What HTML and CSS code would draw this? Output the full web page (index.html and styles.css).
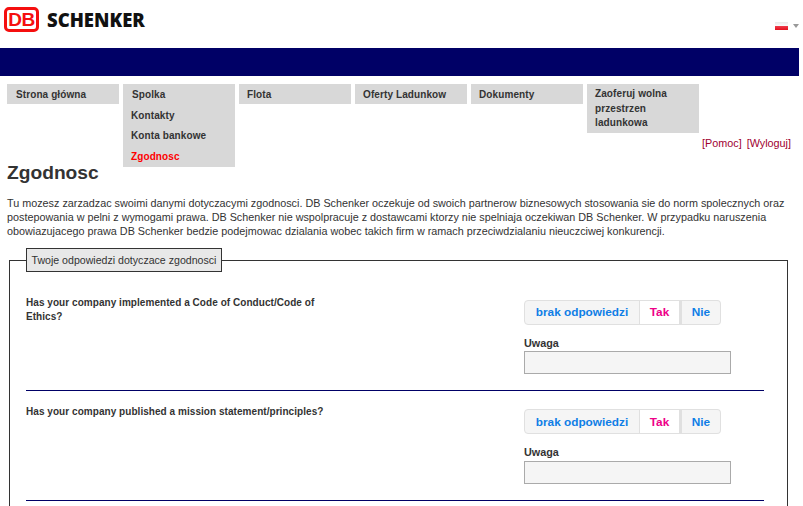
FILE: index.html
```html
<!DOCTYPE html>
<html lang="pl">
<head>
    <meta charset="UTF-8">
    <meta name="viewport" content="width=device-width, initial-scale=1.0">
    <title>Zgodnosc</title>
    <link rel="stylesheet" href="styles.css">
</head>
<body>

    <div class="header">
        <div class="logo">
            <span class="logo-db">DB</span>
            <span class="logo-name">SCHENKER</span>
        </div>
        <div class="lang">
            <span class="flag"></span>
            <span class="lang-arrow"></span>
        </div>
    </div>
    <div class="band"></div>

    <div class="nav">
        <div class="menu">
            <div class="menu-item"><a class="menu-top">Strona główna</a></div>
            <div class="menu-item">
                <a class="menu-top">Spolka</a>
                <div class="submenu">
                    <a class="menu-sub">Kontakty</a>
                    <a class="menu-sub">Konta bankowe</a>
                    <a class="menu-sub current">Zgodnosc</a>
                </div>
            </div>
            <div class="menu-item"><a class="menu-top">Flota</a></div>
            <div class="menu-item"><a class="menu-top">Oferty Ladunkow</a></div>
            <div class="menu-item"><a class="menu-top">Dokumenty</a></div>
            <div class="menu-item"><a class="menu-top wrap">Zaoferuj wolna przestrzen ladunkowa</a></div>
        </div>
        <div class="links"><a>[Pomoc]</a><a>[Wyloguj]</a></div>
    </div>

    <div class="content">
        <h1>Zgodnosc</h1>
        <p class="intro">Tu mozesz zarzadzac swoimi danymi dotyczacymi zgodnosci. DB Schenker oczekuje od swoich partnerow biznesowych stosowania sie do norm spolecznych oraz postepowania w pelni z wymogami prawa. DB Schenker nie wspolpracuje z dostawcami ktorzy nie spelniaja oczekiwan DB Schenker. W przypadku naruszenia obowiazujacego prawa DB Schenker bedzie podejmowac dzialania wobec takich firm w ramach przeciwdzialaniu nieuczciwej konkurencji.</p>

        <fieldset class="answers">
            <legend>Twoje odpowiedzi dotyczace zgodnosci</legend>

            <div class="question">
                <div class="question-text">Has your company implemented a Code of Conduct/Code of Ethics?</div>
                <div class="question-form">
                    <div class="choice">
                        <button type="button" class="none">brak odpowiedzi</button>
                        <button type="button" class="yes">Tak</button>
                        <button type="button" class="no">Nie</button>
                    </div>
                    <label for="note1">Uwaga</label>
                    <input type="text" id="note1">
                </div>
            </div>

            <div class="question">
                <div class="question-text">Has your company published a mission statement/principles?</div>
                <div class="question-form">
                    <div class="choice">
                        <button type="button" class="none">brak odpowiedzi</button>
                        <button type="button" class="yes">Tak</button>
                        <button type="button" class="no">Nie</button>
                    </div>
                    <label for="note2">Uwaga</label>
                    <input type="text" id="note2">
                </div>
            </div>
        </fieldset>
    </div>

</body>
</html>
```

FILE: styles.css
```css
html {
    height: 100%;
    overflow: hidden;
}

body {
    font-family: "Liberation Sans", Arial, sans-serif;
    font-size: 10.8px;
    color: #333;
    width: 799px;
    height: 100vh;
    overflow: hidden;
    margin: 0;
    background-color: white;
}

.header {
    height: 48px;
    display: flex;
    justify-content: space-between;
}

.logo {
    display: flex;
    align-items: center;
    gap: 8px;
    height: 25px;
    padding: 7px 0 0 4px;
}

.logo-db {
    width: 29px;
    height: 19px;
    border: 3px solid #f50f0f;
    border-radius: 5px;
    color: #f50f0f;
    font-size: 19px;
    font-weight: bold;
    line-height: 19px;
    text-align: center;
    letter-spacing: -0.5px;
}

.logo-name {
    font-family: "Open Sans", sans-serif;
    font-size: 18.5px;
    font-weight: 800;
    color: #111;
}

.lang {
    display: flex;
    align-items: center;
    gap: 5px;
    height: 8px;
    padding-top: 22px;
}

.flag {
    width: 13px;
    height: 8px;
    background: linear-gradient(#e8e8e8, #fafafa 45%, #f04050 45%, #e4101c);
}

.lang-arrow {
    border-left: 3px solid transparent;
    border-right: 3px solid transparent;
    border-top: 4px solid #999;
}

.band {
    height: 28px;
    background-color: #000066;
}

.nav {
    display: grid;
    padding-top: 8px;
}

.menu,
.links {
    grid-area: 1 / 1;
}

.menu {
    display: flex;
    align-items: flex-start;
    gap: 4px;
    padding-left: 7px;
}

.menu-item {
    width: 112px;
    background-color: #d8d8d8;
    font-size: 10px;
    font-weight: bold;
    letter-spacing: 0.1px;
}

.menu-top {
    display: block;
    padding: 4px 8px 2px 9px;
    line-height: 14px;
}

.menu-item:nth-child(n+3) .menu-top {
    padding-left: 8px;
}

.menu-item .menu-top.wrap {
    padding-top: 3px;
    padding-bottom: 2px;
    line-height: 14.7px;
}

.submenu {
    padding-top: 2px;
}

.menu-sub {
    display: block;
    padding: 0 8px;
    line-height: 20.4px;
}

.menu-sub.current {
    color: #ff0000;
}

.links {
    display: flex;
    justify-content: flex-end;
    gap: 5px;
    padding: 52px 8px 0 0;
    line-height: 14px;
    color: #a00030;
}

.content {
    padding: 0 11px 0 7px;
}

h1 {
    font-size: 19.2px;
    line-height: 22px;
    color: #333;
    margin: -5px 0 0;
}

.intro {
    margin: 12px 0 0;
    line-height: 14px;
}

.answers {
    margin: 10px 0 0 2px;
    padding: 9.6px 23px 40px 16px;
    border: 1px solid #333;
}

.answers legend {
    padding: 4.5px 4.5px;
    font-size: 10.6px;
    line-height: 13px;
    background-color: #e8e8e8;
    border: 1px solid #333;
}

.question {
    display: flex;
    padding-top: 13px;
    height: 95.6px;
    border-bottom: 1px solid #000066;
}

.question-text {
    width: 310px;
    margin-right: 188px;
    padding-top: 1px;
    font-size: 10px;
    font-weight: bold;
    letter-spacing: 0.05px;
    line-height: 14px;
}

.question-form {
    padding-top: 5px;
}

.choice {
    display: flex;
    height: 25px;
    margin-bottom: 12px;
}

.choice button {
    height: 25px;
    padding: 0;
    font-family: "Liberation Sans", Arial, sans-serif;
    font-size: 11.8px;
    font-weight: bold;
    color: #0f7ee6;
    background-color: #f5f5f5;
    border: 1px solid #e0e0e0;
}

.choice .none {
    width: 116px;
    border-radius: 4px 0 0 4px;
}

.choice .yes {
    width: 41px;
    margin-left: -1px;
    color: #ee0088;
    background-color: white;
}

.choice .no {
    width: 41px;
    border-left-width: 2px;
    border-radius: 0 4px 4px 0;
}

label {
    display: block;
    font-weight: bold;
    line-height: 13px;
    margin-bottom: 1.5px;
}

input {
    display: block;
    box-sizing: border-box;
    width: 207px;
    height: 23px;
    background-color: #f5f5f5;
    border: 1px solid #aaa;
    padding: 0 4px;
}
```
